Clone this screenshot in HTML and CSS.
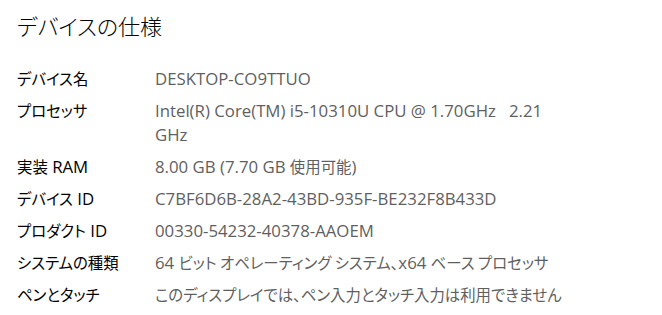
FILE: index.html
```html
<!DOCTYPE html>
<html lang="ja">
<head>
<meta charset="utf-8">
<title>デバイスの仕様</title>
<link rel="stylesheet" href="styles.css">
</head>
<body>
<main class="page">
  <h1 class="title">デバイスの仕様</h1>
  <dl class="specs">
    <dt class="label"><span class="ja">デバイス名</span></dt>
    <dd class="value">DESKTOP-CO9TTUO</dd>
    <dt class="label"><span class="ja">プロセッサ</span></dt>
    <dd class="value">Intel(R) Core(TM) i5-10310U CPU @ 1.70GHz&nbsp;&nbsp; 2.21 GHz</dd>
    <dt class="label"><span class="ja">実装</span> RAM</dt>
    <dd class="value">8.00 GB (7.70 GB <span class="ja">使用可能</span>)</dd>
    <dt class="label"><span class="ja">デバイス</span> ID</dt>
    <dd class="value">C7BF6D6B-28A2-43BD-935F-BE232F8B433D</dd>
    <dt class="label"><span class="ja">プロダクト</span> ID</dt>
    <dd class="value">00330-54232-40378-AAOEM</dd>
    <dt class="label"><span class="ja">システムの種類</span></dt>
    <dd class="value">64 <span class="ja">ビット オペレーティング システム、</span>x64 <span class="ja">ベース プロセッサ</span></dd>
    <dt class="label"><span class="ja">ペンとタッチ</span></dt>
    <dd class="value"><span class="ja">このディスプレイでは、ペン入力とタッチ入力は利用できません</span></dd>
  </dl>
</main>
</body>
</html>
```

FILE: styles.css
```css
html, body {
  margin: 0;
  padding: 0;
  background: #ffffff;
}

.page {
  padding: 8px 0 0 17px;
  font-family: "Open Sans", "Noto Sans CJK JP", sans-serif;
}

.title {
  margin: 0;
  font-size: 22px;
  font-weight: 300;
  line-height: 34px;
  color: #000000;
  font-family: "Noto Sans CJK JP", sans-serif;
  font-feature-settings: "palt" 1;
}

.specs {
  margin: 25px 0 0 0;
  display: grid;
  grid-template-columns: 138px 415px;
  row-gap: 8px;
  font-size: 16.8px;
  line-height: 24px;
}

.label {
  margin: 0;
  color: #000000;
}

.value {
  margin: 0;
  color: #5f5f5f;
}

.ja {
  font-family: "Noto Sans CJK JP", sans-serif;
  font-size: 15.4px;
  line-height: 1;
  font-feature-settings: "palt" 1;
}
```
